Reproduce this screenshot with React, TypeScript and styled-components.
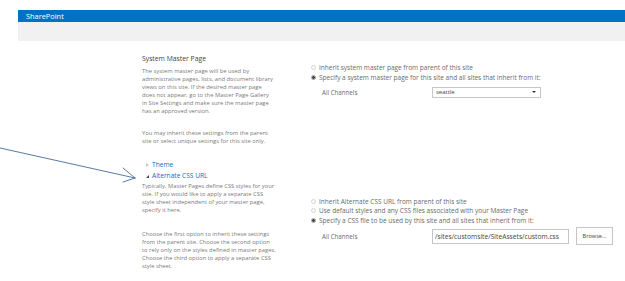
import styled, { createGlobalStyle } from 'styled-components';

const GlobalStyle = createGlobalStyle`
  html, body {
    margin: 0;
    padding: 0;
    background: #ffffff;
  }
  body {
    font-family: 'Open Sans', 'Noto Sans', sans-serif;
    color: #777777;
  }
`;

const Page = styled.div`
  position: relative;
  width: 625px;
  height: 281px;
  overflow: hidden;
  padding-top: 10px;
  box-sizing: border-box;
`;

const Chrome = styled.div`
  margin-left: 18px;
`;

const SuiteBar = styled.div`
  height: 12px;
  background: #0072c6;
  color: #ffffff;
  font-size: 7.4px;
  line-height: 12px;
  padding-left: 8px;
`;

const Ribbon = styled.div`
  height: 19px;
  background: #f1f1f1;
`;

const Form = styled.div`
  display: grid;
  grid-template-columns: 134px 1fr;
  column-gap: 32px;
  align-items: start;
  padding-left: 142px;
  margin-top: 12.5px;
`;

const Description = styled.div`
  font-size: 5.8px;
  line-height: 8px;
  color: #7a7a7a;
  white-space: nowrap;
`;

const SectionTitle = styled.div`
  font-size: 6.8px;
  color: #444444;
  line-height: 10px;
  margin-bottom: 3px;
`;

const Para = styled.p<{ gap?: number }>`
  margin: 0 0 ${p => p.gap ?? 14}px;
`;

const LinkRow = styled.div<{ open?: boolean }>`
  display: flex;
  align-items: center;
  gap: 3px;
  padding-left: 4px;
  height: 11px;
  font-size: 6.6px;
  color: #0072c6;

  &::before {
    content: '';
    display: block;
    width: 0;
    height: 0;
    ${p =>
      p.open
        ? `border-left: 3px solid transparent;
           border-bottom: 3px solid #444;`
        : `border-top: 2.5px solid transparent;
           border-bottom: 2.5px solid transparent;
           border-left: 3px solid #c8c8c8;`}
  }
`;

const Options = styled.div<{ top: number }>`
  padding-top: ${p => p.top}px;
  font-size: 6.5px;
  color: #6a6a6a;
`;

const RadioRow = styled.label<{ h?: number }>`
  display: flex;
  align-items: center;
  gap: 3px;
  height: ${p => p.h ?? 10}px;
  padding-left: 3px;
  white-space: nowrap;
`;

const Radio = styled.span<{ checked?: boolean }>`
  width: 5px;
  height: 5px;
  border-radius: 50%;
  border: 0.6px solid ${p => (p.checked ? '#9a9a9a' : '#d6d6d6')};
  background: ${p => (p.checked ? 'radial-gradient(circle, #444 0 1.3px, #fff 1.6px)' : '#fafafa')};
  box-sizing: border-box;
  flex: none;
`;

const ChannelRow = styled.div<{ h: number; top: number }>`
  display: flex;
  align-items: center;
  height: ${p => p.h}px;
  padding-left: 14px;
  margin-top: ${p => p.top}px;
  font-size: 6.2px;
`;

const ChannelLabel = styled.span`
  width: 110px;
`;

const Select = styled.div`
  width: 109px;
  height: 11px;
  border: 1px solid #c6c6c6;
  box-sizing: border-box;
  display: flex;
  align-items: center;
  justify-content: space-between;
  padding: 0 4px 0 3px;
  color: #444;
  font-size: 6px;

  &::after {
    content: '';
    border-left: 2px solid transparent;
    border-right: 2px solid transparent;
    border-top: 2.5px solid #333;
  }
`;

const TextInput = styled.div`
  width: 137px;
  height: 15px;
  border: 1px solid #c6c6c6;
  box-sizing: border-box;
  display: flex;
  align-items: center;
  padding-left: 2px;
  color: #444;
  font-size: 6.7px;
  white-space: nowrap;
  overflow: hidden;
`;

const Button = styled.div`
  margin-left: 7px;
  width: 37px;
  height: 18px;
  border: 1px solid #c6c6c6;
  box-sizing: border-box;
  background: #fdfdfd;
  display: flex;
  align-items: center;
  justify-content: center;
  font-size: 5.6px;
  color: #444;
`;

const Arrow = styled.svg`
  position: absolute;
  left: 0;
  top: 0;
  pointer-events: none;
`;

export default function App() {
  return (
    <Page>
      <GlobalStyle />
      <Chrome>
        <SuiteBar>SharePoint</SuiteBar>
        <Ribbon />
      </Chrome>
      <Form>
        <Description>
          <SectionTitle>System Master Page</SectionTitle>
          <Para gap={14}>
            The system master page will be used by
            <br />
            administrative pages, lists, and document library
            <br />
            views on this site. If the desired master page
            <br />
            does not appear, go to the Master Page Gallery
            <br />
            in Site Settings and make sure the master page
            <br />
            has an approved version.
          </Para>
          <Para gap={15}>
            You may inherit these settings from the parent
            <br />
            site or select unique settings for this site only.
          </Para>
        </Description>
        <Options top={8.5}>
          <RadioRow>
            <Radio />
            Inherit system master page from parent of this site
          </RadioRow>
          <RadioRow>
            <Radio checked />
            Specify a system master page for this site and all sites that inherit from it:
          </RadioRow>
          <ChannelRow h={12} top={4}>
            <ChannelLabel>All Channels</ChannelLabel>
            <Select>seattle</Select>
          </ChannelRow>
        </Options>

        <Description>
          <LinkRow>Theme</LinkRow>
          <LinkRow open>Alternate CSS URL</LinkRow>
          <Para gap={16}>
            Typically, Master Pages define CSS styles for your
            <br />
            site. If you would like to apply a separate CSS
            <br />
            style sheet independent of your master page,
            <br />
            specify it here.
          </Para>
          <Para>
            Choose the first option to inherit these settings
            <br />
            from the parent site. Choose the second option
            <br />
            to rely only on the styles defined in master pages.
            <br />
            Choose the third option to apply a separate CSS
            <br />
            style sheet.
          </Para>
        </Description>
        <Options top={36.5}>
          <RadioRow>
            <Radio />
            Inherit Alternate CSS URL from parent of this site
          </RadioRow>
          <RadioRow h={9.5}>
            <Radio />
            Use default styles and any CSS files associated with your Master Page
          </RadioRow>
          <RadioRow h={9.5}>
            <Radio checked />
            Specify a CSS file to be used by this site and all sites that inherit from it:
          </RadioRow>
          <ChannelRow h={18} top={2}>
            <ChannelLabel>All Channels</ChannelLabel>
            <TextInput>/sites/customsite/SiteAssets/custom.css</TextInput>
            <Button>Browse...</Button>
          </ChannelRow>
        </Options>
      </Form>
      <Arrow width="625" height="281" viewBox="0 0 625 281">
        <g stroke="#4a6a9a" strokeWidth="0.9" fill="none" strokeLinecap="round">
          <line x1="0" y1="148" x2="135" y2="178" />
          <line x1="135" y1="178" x2="123" y2="168" />
          <line x1="135" y1="178" x2="123" y2="182" />
        </g>
      </Arrow>
    </Page>
  );
}
